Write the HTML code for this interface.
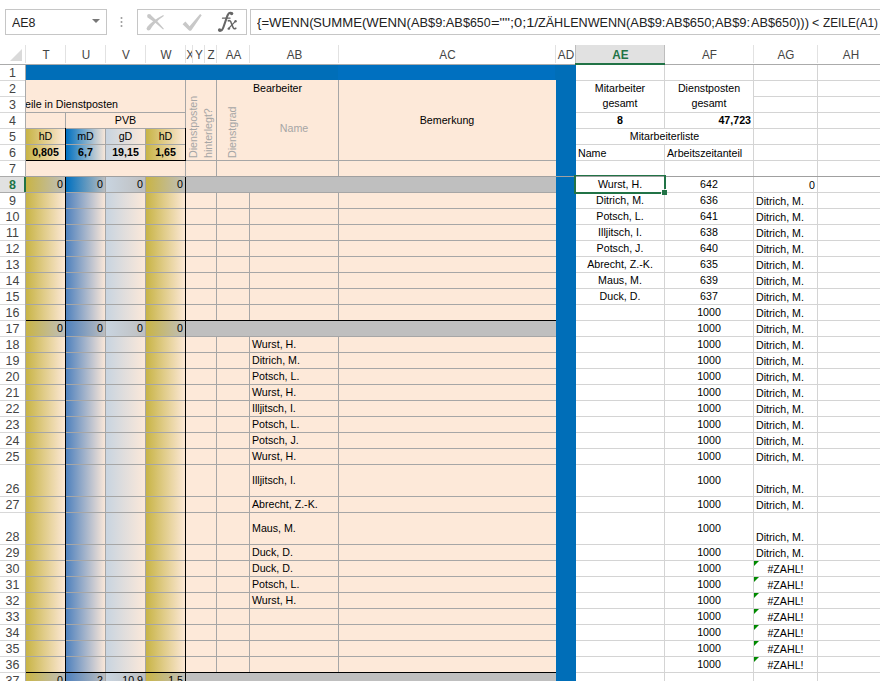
<!DOCTYPE html><html><head><meta charset="utf-8"><style>
html,body{margin:0;padding:0;}
body{width:880px;height:681px;overflow:hidden;position:relative;background:#fff;font-family:"Liberation Sans",sans-serif;}
div,p,svg{position:absolute;margin:0;}
p{white-space:nowrap;}
.c{font-size:10.67px;line-height:15px;color:#000;}
.b{font-weight:bold;}
.g{color:#a6a6a6;}
.rot{transform-origin:0 0;transform:rotate(-90deg);line-height:12px;}
.h{font-size:13px;line-height:19px;text-align:center;color:#444;transform:scaleX(0.9);}
.h.sel{color:#217346;font-weight:bold;}
.rh{font-size:12.5px;line-height:17px;text-align:center;color:#444;}
.rh.sel{color:#217346;font-weight:bold;}
.tb{font-size:13.5px;line-height:18px;color:#222;}
.fx{font-family:"Liberation Serif",serif;font-style:italic;font-size:23px;line-height:26px;color:#606060;-webkit-text-stroke:0.6px #606060;}
</style></head><body>
<div style="left:26px;top:64px;width:312px;height:16px;background:#006eb8;"></div>
<div style="left:338px;top:64px;width:217px;height:16px;background:#0070c0;"></div>
<div style="left:555px;top:64px;width:1px;height:16px;background:#006eb8;"></div>
<div style="left:556px;top:64px;width:20px;height:617px;background:#006eb8;"></div>
<div style="left:26px;top:80px;width:530px;height:96px;background:#fde9d9;"></div>
<div style="left:186px;top:176px;width:370px;height:16px;background:#bfbfbf;"></div>
<div style="left:186px;top:192px;width:370px;height:16px;background:#fde9d9;"></div>
<div style="left:186px;top:208px;width:370px;height:16px;background:#fde9d9;"></div>
<div style="left:186px;top:224px;width:370px;height:16px;background:#fde9d9;"></div>
<div style="left:186px;top:240px;width:370px;height:16px;background:#fde9d9;"></div>
<div style="left:186px;top:256px;width:370px;height:16px;background:#fde9d9;"></div>
<div style="left:186px;top:272px;width:370px;height:16px;background:#fde9d9;"></div>
<div style="left:186px;top:288px;width:370px;height:16px;background:#fde9d9;"></div>
<div style="left:186px;top:304px;width:370px;height:16px;background:#fde9d9;"></div>
<div style="left:186px;top:320px;width:370px;height:16px;background:#bfbfbf;"></div>
<div style="left:186px;top:336px;width:370px;height:16px;background:#fde9d9;"></div>
<div style="left:186px;top:352px;width:370px;height:16px;background:#fde9d9;"></div>
<div style="left:186px;top:368px;width:370px;height:16px;background:#fde9d9;"></div>
<div style="left:186px;top:384px;width:370px;height:16px;background:#fde9d9;"></div>
<div style="left:186px;top:400px;width:370px;height:16px;background:#fde9d9;"></div>
<div style="left:186px;top:416px;width:370px;height:16px;background:#fde9d9;"></div>
<div style="left:186px;top:432px;width:370px;height:16px;background:#fde9d9;"></div>
<div style="left:186px;top:448px;width:370px;height:16px;background:#fde9d9;"></div>
<div style="left:186px;top:464px;width:370px;height:32px;background:#fde9d9;"></div>
<div style="left:186px;top:496px;width:370px;height:16px;background:#fde9d9;"></div>
<div style="left:186px;top:512px;width:370px;height:32px;background:#fde9d9;"></div>
<div style="left:186px;top:544px;width:370px;height:16px;background:#fde9d9;"></div>
<div style="left:186px;top:560px;width:370px;height:16px;background:#fde9d9;"></div>
<div style="left:186px;top:576px;width:370px;height:16px;background:#fde9d9;"></div>
<div style="left:186px;top:592px;width:370px;height:16px;background:#fde9d9;"></div>
<div style="left:186px;top:608px;width:370px;height:16px;background:#fde9d9;"></div>
<div style="left:186px;top:624px;width:370px;height:16px;background:#fde9d9;"></div>
<div style="left:186px;top:640px;width:370px;height:16px;background:#fde9d9;"></div>
<div style="left:186px;top:656px;width:370px;height:16px;background:#fde9d9;"></div>
<div style="left:186px;top:672px;width:370px;height:16px;background:#bfbfbf;"></div>
<div style="left:26px;top:128px;width:40px;height:16px;background:linear-gradient(to right,#c8b446,#fde9d9);"></div>
<div style="left:66px;top:128px;width:40px;height:16px;background:linear-gradient(to right,#0070c0,#fde9d9);"></div>
<div style="left:106px;top:128px;width:40px;height:16px;background:linear-gradient(to right,#c8d4e0,#fde9d9);"></div>
<div style="left:146px;top:128px;width:40px;height:16px;background:linear-gradient(to right,#c8b446,#fde9d9);"></div>
<div style="left:26px;top:144px;width:40px;height:16px;background:linear-gradient(to right,#c8b446,#fde9d9);"></div>
<div style="left:66px;top:144px;width:40px;height:16px;background:linear-gradient(to right,#0070c0,#fde9d9);"></div>
<div style="left:106px;top:144px;width:40px;height:16px;background:linear-gradient(to right,#c8d4e0,#fde9d9);"></div>
<div style="left:146px;top:144px;width:40px;height:16px;background:linear-gradient(to right,#c8b446,#fde9d9);"></div>
<div style="left:26px;top:176px;width:40px;height:16px;background:linear-gradient(to right,#c8b446,#bfbfbf);"></div>
<div style="left:66px;top:176px;width:40px;height:16px;background:linear-gradient(to right,#0070c0,#bfbfbf);"></div>
<div style="left:106px;top:176px;width:40px;height:16px;background:linear-gradient(to right,#c8d4e0,#bfbfbf);"></div>
<div style="left:146px;top:176px;width:40px;height:16px;background:linear-gradient(to right,#c8b446,#bfbfbf);"></div>
<div style="left:26px;top:192px;width:40px;height:16px;background:linear-gradient(to right,#c8b446,#fde9d9);"></div>
<div style="left:66px;top:192px;width:40px;height:16px;background:linear-gradient(to right,#4f81bd,#fde9d9);"></div>
<div style="left:106px;top:192px;width:40px;height:16px;background:linear-gradient(to right,#c8d4e0,#fde9d9);"></div>
<div style="left:146px;top:192px;width:40px;height:16px;background:linear-gradient(to right,#c8b446,#fde9d9);"></div>
<div style="left:26px;top:208px;width:40px;height:16px;background:linear-gradient(to right,#c8b446,#fde9d9);"></div>
<div style="left:66px;top:208px;width:40px;height:16px;background:linear-gradient(to right,#4f81bd,#fde9d9);"></div>
<div style="left:106px;top:208px;width:40px;height:16px;background:linear-gradient(to right,#c8d4e0,#fde9d9);"></div>
<div style="left:146px;top:208px;width:40px;height:16px;background:linear-gradient(to right,#c8b446,#fde9d9);"></div>
<div style="left:26px;top:224px;width:40px;height:16px;background:linear-gradient(to right,#c8b446,#fde9d9);"></div>
<div style="left:66px;top:224px;width:40px;height:16px;background:linear-gradient(to right,#4f81bd,#fde9d9);"></div>
<div style="left:106px;top:224px;width:40px;height:16px;background:linear-gradient(to right,#c8d4e0,#fde9d9);"></div>
<div style="left:146px;top:224px;width:40px;height:16px;background:linear-gradient(to right,#c8b446,#fde9d9);"></div>
<div style="left:26px;top:240px;width:40px;height:16px;background:linear-gradient(to right,#c8b446,#fde9d9);"></div>
<div style="left:66px;top:240px;width:40px;height:16px;background:linear-gradient(to right,#4f81bd,#fde9d9);"></div>
<div style="left:106px;top:240px;width:40px;height:16px;background:linear-gradient(to right,#c8d4e0,#fde9d9);"></div>
<div style="left:146px;top:240px;width:40px;height:16px;background:linear-gradient(to right,#c8b446,#fde9d9);"></div>
<div style="left:26px;top:256px;width:40px;height:16px;background:linear-gradient(to right,#c8b446,#fde9d9);"></div>
<div style="left:66px;top:256px;width:40px;height:16px;background:linear-gradient(to right,#4f81bd,#fde9d9);"></div>
<div style="left:106px;top:256px;width:40px;height:16px;background:linear-gradient(to right,#c8d4e0,#fde9d9);"></div>
<div style="left:146px;top:256px;width:40px;height:16px;background:linear-gradient(to right,#c8b446,#fde9d9);"></div>
<div style="left:26px;top:272px;width:40px;height:16px;background:linear-gradient(to right,#c8b446,#fde9d9);"></div>
<div style="left:66px;top:272px;width:40px;height:16px;background:linear-gradient(to right,#4f81bd,#fde9d9);"></div>
<div style="left:106px;top:272px;width:40px;height:16px;background:linear-gradient(to right,#c8d4e0,#fde9d9);"></div>
<div style="left:146px;top:272px;width:40px;height:16px;background:linear-gradient(to right,#c8b446,#fde9d9);"></div>
<div style="left:26px;top:288px;width:40px;height:16px;background:linear-gradient(to right,#c8b446,#fde9d9);"></div>
<div style="left:66px;top:288px;width:40px;height:16px;background:linear-gradient(to right,#4f81bd,#fde9d9);"></div>
<div style="left:106px;top:288px;width:40px;height:16px;background:linear-gradient(to right,#c8d4e0,#fde9d9);"></div>
<div style="left:146px;top:288px;width:40px;height:16px;background:linear-gradient(to right,#c8b446,#fde9d9);"></div>
<div style="left:26px;top:304px;width:40px;height:16px;background:linear-gradient(to right,#c8b446,#fde9d9);"></div>
<div style="left:66px;top:304px;width:40px;height:16px;background:linear-gradient(to right,#4f81bd,#fde9d9);"></div>
<div style="left:106px;top:304px;width:40px;height:16px;background:linear-gradient(to right,#c8d4e0,#fde9d9);"></div>
<div style="left:146px;top:304px;width:40px;height:16px;background:linear-gradient(to right,#c8b446,#fde9d9);"></div>
<div style="left:26px;top:320px;width:40px;height:16px;background:linear-gradient(to right,#c8b446,#bfbfbf);"></div>
<div style="left:66px;top:320px;width:40px;height:16px;background:linear-gradient(to right,#4f81bd,#bfbfbf);"></div>
<div style="left:106px;top:320px;width:40px;height:16px;background:linear-gradient(to right,#c8d4e0,#bfbfbf);"></div>
<div style="left:146px;top:320px;width:40px;height:16px;background:linear-gradient(to right,#c8b446,#bfbfbf);"></div>
<div style="left:26px;top:336px;width:40px;height:16px;background:linear-gradient(to right,#c8b446,#fde9d9);"></div>
<div style="left:66px;top:336px;width:40px;height:16px;background:linear-gradient(to right,#4f81bd,#fde9d9);"></div>
<div style="left:106px;top:336px;width:40px;height:16px;background:linear-gradient(to right,#c8d4e0,#fde9d9);"></div>
<div style="left:146px;top:336px;width:40px;height:16px;background:linear-gradient(to right,#c8b446,#fde9d9);"></div>
<div style="left:26px;top:352px;width:40px;height:16px;background:linear-gradient(to right,#c8b446,#fde9d9);"></div>
<div style="left:66px;top:352px;width:40px;height:16px;background:linear-gradient(to right,#4f81bd,#fde9d9);"></div>
<div style="left:106px;top:352px;width:40px;height:16px;background:linear-gradient(to right,#c8d4e0,#fde9d9);"></div>
<div style="left:146px;top:352px;width:40px;height:16px;background:linear-gradient(to right,#c8b446,#fde9d9);"></div>
<div style="left:26px;top:368px;width:40px;height:16px;background:linear-gradient(to right,#c8b446,#fde9d9);"></div>
<div style="left:66px;top:368px;width:40px;height:16px;background:linear-gradient(to right,#4f81bd,#fde9d9);"></div>
<div style="left:106px;top:368px;width:40px;height:16px;background:linear-gradient(to right,#c8d4e0,#fde9d9);"></div>
<div style="left:146px;top:368px;width:40px;height:16px;background:linear-gradient(to right,#c8b446,#fde9d9);"></div>
<div style="left:26px;top:384px;width:40px;height:16px;background:linear-gradient(to right,#c8b446,#fde9d9);"></div>
<div style="left:66px;top:384px;width:40px;height:16px;background:linear-gradient(to right,#4f81bd,#fde9d9);"></div>
<div style="left:106px;top:384px;width:40px;height:16px;background:linear-gradient(to right,#c8d4e0,#fde9d9);"></div>
<div style="left:146px;top:384px;width:40px;height:16px;background:linear-gradient(to right,#c8b446,#fde9d9);"></div>
<div style="left:26px;top:400px;width:40px;height:16px;background:linear-gradient(to right,#c8b446,#fde9d9);"></div>
<div style="left:66px;top:400px;width:40px;height:16px;background:linear-gradient(to right,#4f81bd,#fde9d9);"></div>
<div style="left:106px;top:400px;width:40px;height:16px;background:linear-gradient(to right,#c8d4e0,#fde9d9);"></div>
<div style="left:146px;top:400px;width:40px;height:16px;background:linear-gradient(to right,#c8b446,#fde9d9);"></div>
<div style="left:26px;top:416px;width:40px;height:16px;background:linear-gradient(to right,#c8b446,#fde9d9);"></div>
<div style="left:66px;top:416px;width:40px;height:16px;background:linear-gradient(to right,#4f81bd,#fde9d9);"></div>
<div style="left:106px;top:416px;width:40px;height:16px;background:linear-gradient(to right,#c8d4e0,#fde9d9);"></div>
<div style="left:146px;top:416px;width:40px;height:16px;background:linear-gradient(to right,#c8b446,#fde9d9);"></div>
<div style="left:26px;top:432px;width:40px;height:16px;background:linear-gradient(to right,#c8b446,#fde9d9);"></div>
<div style="left:66px;top:432px;width:40px;height:16px;background:linear-gradient(to right,#4f81bd,#fde9d9);"></div>
<div style="left:106px;top:432px;width:40px;height:16px;background:linear-gradient(to right,#c8d4e0,#fde9d9);"></div>
<div style="left:146px;top:432px;width:40px;height:16px;background:linear-gradient(to right,#c8b446,#fde9d9);"></div>
<div style="left:26px;top:448px;width:40px;height:16px;background:linear-gradient(to right,#c8b446,#fde9d9);"></div>
<div style="left:66px;top:448px;width:40px;height:16px;background:linear-gradient(to right,#4f81bd,#fde9d9);"></div>
<div style="left:106px;top:448px;width:40px;height:16px;background:linear-gradient(to right,#c8d4e0,#fde9d9);"></div>
<div style="left:146px;top:448px;width:40px;height:16px;background:linear-gradient(to right,#c8b446,#fde9d9);"></div>
<div style="left:26px;top:464px;width:40px;height:32px;background:linear-gradient(to right,#c8b446,#fde9d9);"></div>
<div style="left:66px;top:464px;width:40px;height:32px;background:linear-gradient(to right,#4f81bd,#fde9d9);"></div>
<div style="left:106px;top:464px;width:40px;height:32px;background:linear-gradient(to right,#c8d4e0,#fde9d9);"></div>
<div style="left:146px;top:464px;width:40px;height:32px;background:linear-gradient(to right,#c8b446,#fde9d9);"></div>
<div style="left:26px;top:496px;width:40px;height:16px;background:linear-gradient(to right,#c8b446,#fde9d9);"></div>
<div style="left:66px;top:496px;width:40px;height:16px;background:linear-gradient(to right,#4f81bd,#fde9d9);"></div>
<div style="left:106px;top:496px;width:40px;height:16px;background:linear-gradient(to right,#c8d4e0,#fde9d9);"></div>
<div style="left:146px;top:496px;width:40px;height:16px;background:linear-gradient(to right,#c8b446,#fde9d9);"></div>
<div style="left:26px;top:512px;width:40px;height:32px;background:linear-gradient(to right,#c8b446,#fde9d9);"></div>
<div style="left:66px;top:512px;width:40px;height:32px;background:linear-gradient(to right,#4f81bd,#fde9d9);"></div>
<div style="left:106px;top:512px;width:40px;height:32px;background:linear-gradient(to right,#c8d4e0,#fde9d9);"></div>
<div style="left:146px;top:512px;width:40px;height:32px;background:linear-gradient(to right,#c8b446,#fde9d9);"></div>
<div style="left:26px;top:544px;width:40px;height:16px;background:linear-gradient(to right,#c8b446,#fde9d9);"></div>
<div style="left:66px;top:544px;width:40px;height:16px;background:linear-gradient(to right,#4f81bd,#fde9d9);"></div>
<div style="left:106px;top:544px;width:40px;height:16px;background:linear-gradient(to right,#c8d4e0,#fde9d9);"></div>
<div style="left:146px;top:544px;width:40px;height:16px;background:linear-gradient(to right,#c8b446,#fde9d9);"></div>
<div style="left:26px;top:560px;width:40px;height:16px;background:linear-gradient(to right,#c8b446,#fde9d9);"></div>
<div style="left:66px;top:560px;width:40px;height:16px;background:linear-gradient(to right,#4f81bd,#fde9d9);"></div>
<div style="left:106px;top:560px;width:40px;height:16px;background:linear-gradient(to right,#c8d4e0,#fde9d9);"></div>
<div style="left:146px;top:560px;width:40px;height:16px;background:linear-gradient(to right,#c8b446,#fde9d9);"></div>
<div style="left:26px;top:576px;width:40px;height:16px;background:linear-gradient(to right,#c8b446,#fde9d9);"></div>
<div style="left:66px;top:576px;width:40px;height:16px;background:linear-gradient(to right,#4f81bd,#fde9d9);"></div>
<div style="left:106px;top:576px;width:40px;height:16px;background:linear-gradient(to right,#c8d4e0,#fde9d9);"></div>
<div style="left:146px;top:576px;width:40px;height:16px;background:linear-gradient(to right,#c8b446,#fde9d9);"></div>
<div style="left:26px;top:592px;width:40px;height:16px;background:linear-gradient(to right,#c8b446,#fde9d9);"></div>
<div style="left:66px;top:592px;width:40px;height:16px;background:linear-gradient(to right,#4f81bd,#fde9d9);"></div>
<div style="left:106px;top:592px;width:40px;height:16px;background:linear-gradient(to right,#c8d4e0,#fde9d9);"></div>
<div style="left:146px;top:592px;width:40px;height:16px;background:linear-gradient(to right,#c8b446,#fde9d9);"></div>
<div style="left:26px;top:608px;width:40px;height:16px;background:linear-gradient(to right,#c8b446,#fde9d9);"></div>
<div style="left:66px;top:608px;width:40px;height:16px;background:linear-gradient(to right,#4f81bd,#fde9d9);"></div>
<div style="left:106px;top:608px;width:40px;height:16px;background:linear-gradient(to right,#c8d4e0,#fde9d9);"></div>
<div style="left:146px;top:608px;width:40px;height:16px;background:linear-gradient(to right,#c8b446,#fde9d9);"></div>
<div style="left:26px;top:624px;width:40px;height:16px;background:linear-gradient(to right,#c8b446,#fde9d9);"></div>
<div style="left:66px;top:624px;width:40px;height:16px;background:linear-gradient(to right,#4f81bd,#fde9d9);"></div>
<div style="left:106px;top:624px;width:40px;height:16px;background:linear-gradient(to right,#c8d4e0,#fde9d9);"></div>
<div style="left:146px;top:624px;width:40px;height:16px;background:linear-gradient(to right,#c8b446,#fde9d9);"></div>
<div style="left:26px;top:640px;width:40px;height:16px;background:linear-gradient(to right,#c8b446,#fde9d9);"></div>
<div style="left:66px;top:640px;width:40px;height:16px;background:linear-gradient(to right,#4f81bd,#fde9d9);"></div>
<div style="left:106px;top:640px;width:40px;height:16px;background:linear-gradient(to right,#c8d4e0,#fde9d9);"></div>
<div style="left:146px;top:640px;width:40px;height:16px;background:linear-gradient(to right,#c8b446,#fde9d9);"></div>
<div style="left:26px;top:656px;width:40px;height:16px;background:linear-gradient(to right,#c8b446,#fde9d9);"></div>
<div style="left:66px;top:656px;width:40px;height:16px;background:linear-gradient(to right,#4f81bd,#fde9d9);"></div>
<div style="left:106px;top:656px;width:40px;height:16px;background:linear-gradient(to right,#c8d4e0,#fde9d9);"></div>
<div style="left:146px;top:656px;width:40px;height:16px;background:linear-gradient(to right,#c8b446,#fde9d9);"></div>
<div style="left:26px;top:672px;width:40px;height:16px;background:linear-gradient(to right,#c8b446,#bfbfbf);"></div>
<div style="left:66px;top:672px;width:40px;height:16px;background:linear-gradient(to right,#4f81bd,#bfbfbf);"></div>
<div style="left:106px;top:672px;width:40px;height:16px;background:linear-gradient(to right,#c8d4e0,#bfbfbf);"></div>
<div style="left:146px;top:672px;width:40px;height:16px;background:linear-gradient(to right,#c8b446,#bfbfbf);"></div>
<div style="left:26px;top:112px;width:160px;height:1px;background:#a6a6a6;"></div>
<div style="left:65px;top:112px;width:1px;height:16px;background:#a6a6a6;"></div>
<div style="left:26px;top:128px;width:160px;height:1px;background:#a6a6a6;"></div>
<div style="left:26px;top:144px;width:160px;height:1px;background:#a6a6a6;"></div>
<div style="left:105px;top:128px;width:1px;height:32px;background:#a6a6a6;"></div>
<div style="left:145px;top:128px;width:1px;height:32px;background:#a6a6a6;"></div>
<div style="left:185px;top:80px;width:1px;height:48px;background:#a6a6a6;"></div>
<div style="left:185px;top:160px;width:1px;height:16px;background:#a6a6a6;"></div>
<div style="left:216px;top:80px;width:1px;height:96px;background:#a6a6a6;"></div>
<div style="left:338px;top:80px;width:1px;height:96px;background:#a6a6a6;"></div>
<div style="left:186px;top:160px;width:370px;height:1px;background:#a6a6a6;"></div>
<div style="left:26px;top:192px;width:530px;height:1px;background:#a6a6a6;"></div>
<div style="left:26px;top:208px;width:530px;height:1px;background:#a6a6a6;"></div>
<div style="left:26px;top:224px;width:530px;height:1px;background:#a6a6a6;"></div>
<div style="left:26px;top:240px;width:530px;height:1px;background:#a6a6a6;"></div>
<div style="left:26px;top:256px;width:530px;height:1px;background:#a6a6a6;"></div>
<div style="left:26px;top:272px;width:530px;height:1px;background:#a6a6a6;"></div>
<div style="left:26px;top:288px;width:530px;height:1px;background:#a6a6a6;"></div>
<div style="left:26px;top:304px;width:530px;height:1px;background:#a6a6a6;"></div>
<div style="left:26px;top:336px;width:530px;height:1px;background:#a6a6a6;"></div>
<div style="left:26px;top:352px;width:530px;height:1px;background:#a6a6a6;"></div>
<div style="left:26px;top:368px;width:530px;height:1px;background:#a6a6a6;"></div>
<div style="left:26px;top:384px;width:530px;height:1px;background:#a6a6a6;"></div>
<div style="left:26px;top:400px;width:530px;height:1px;background:#a6a6a6;"></div>
<div style="left:26px;top:416px;width:530px;height:1px;background:#a6a6a6;"></div>
<div style="left:26px;top:432px;width:530px;height:1px;background:#a6a6a6;"></div>
<div style="left:26px;top:448px;width:530px;height:1px;background:#a6a6a6;"></div>
<div style="left:26px;top:464px;width:530px;height:1px;background:#a6a6a6;"></div>
<div style="left:26px;top:496px;width:530px;height:1px;background:#a6a6a6;"></div>
<div style="left:26px;top:512px;width:530px;height:1px;background:#a6a6a6;"></div>
<div style="left:26px;top:544px;width:530px;height:1px;background:#a6a6a6;"></div>
<div style="left:26px;top:560px;width:530px;height:1px;background:#a6a6a6;"></div>
<div style="left:26px;top:576px;width:530px;height:1px;background:#a6a6a6;"></div>
<div style="left:26px;top:592px;width:530px;height:1px;background:#a6a6a6;"></div>
<div style="left:26px;top:608px;width:530px;height:1px;background:#a6a6a6;"></div>
<div style="left:26px;top:624px;width:530px;height:1px;background:#a6a6a6;"></div>
<div style="left:26px;top:640px;width:530px;height:1px;background:#a6a6a6;"></div>
<div style="left:26px;top:656px;width:530px;height:1px;background:#a6a6a6;"></div>
<div style="left:105px;top:176px;width:1px;height:16px;background:#a6a6a6;"></div>
<div style="left:145px;top:176px;width:1px;height:16px;background:#a6a6a6;"></div>
<div style="left:105px;top:192px;width:1px;height:16px;background:#a6a6a6;"></div>
<div style="left:145px;top:192px;width:1px;height:16px;background:#a6a6a6;"></div>
<div style="left:216px;top:192px;width:1px;height:16px;background:#a6a6a6;"></div>
<div style="left:249px;top:192px;width:1px;height:16px;background:#a6a6a6;"></div>
<div style="left:338px;top:192px;width:1px;height:16px;background:#a6a6a6;"></div>
<div style="left:105px;top:208px;width:1px;height:16px;background:#a6a6a6;"></div>
<div style="left:145px;top:208px;width:1px;height:16px;background:#a6a6a6;"></div>
<div style="left:216px;top:208px;width:1px;height:16px;background:#a6a6a6;"></div>
<div style="left:249px;top:208px;width:1px;height:16px;background:#a6a6a6;"></div>
<div style="left:338px;top:208px;width:1px;height:16px;background:#a6a6a6;"></div>
<div style="left:105px;top:224px;width:1px;height:16px;background:#a6a6a6;"></div>
<div style="left:145px;top:224px;width:1px;height:16px;background:#a6a6a6;"></div>
<div style="left:216px;top:224px;width:1px;height:16px;background:#a6a6a6;"></div>
<div style="left:249px;top:224px;width:1px;height:16px;background:#a6a6a6;"></div>
<div style="left:338px;top:224px;width:1px;height:16px;background:#a6a6a6;"></div>
<div style="left:105px;top:240px;width:1px;height:16px;background:#a6a6a6;"></div>
<div style="left:145px;top:240px;width:1px;height:16px;background:#a6a6a6;"></div>
<div style="left:216px;top:240px;width:1px;height:16px;background:#a6a6a6;"></div>
<div style="left:249px;top:240px;width:1px;height:16px;background:#a6a6a6;"></div>
<div style="left:338px;top:240px;width:1px;height:16px;background:#a6a6a6;"></div>
<div style="left:105px;top:256px;width:1px;height:16px;background:#a6a6a6;"></div>
<div style="left:145px;top:256px;width:1px;height:16px;background:#a6a6a6;"></div>
<div style="left:216px;top:256px;width:1px;height:16px;background:#a6a6a6;"></div>
<div style="left:249px;top:256px;width:1px;height:16px;background:#a6a6a6;"></div>
<div style="left:338px;top:256px;width:1px;height:16px;background:#a6a6a6;"></div>
<div style="left:105px;top:272px;width:1px;height:16px;background:#a6a6a6;"></div>
<div style="left:145px;top:272px;width:1px;height:16px;background:#a6a6a6;"></div>
<div style="left:216px;top:272px;width:1px;height:16px;background:#a6a6a6;"></div>
<div style="left:249px;top:272px;width:1px;height:16px;background:#a6a6a6;"></div>
<div style="left:338px;top:272px;width:1px;height:16px;background:#a6a6a6;"></div>
<div style="left:105px;top:288px;width:1px;height:16px;background:#a6a6a6;"></div>
<div style="left:145px;top:288px;width:1px;height:16px;background:#a6a6a6;"></div>
<div style="left:216px;top:288px;width:1px;height:16px;background:#a6a6a6;"></div>
<div style="left:249px;top:288px;width:1px;height:16px;background:#a6a6a6;"></div>
<div style="left:338px;top:288px;width:1px;height:16px;background:#a6a6a6;"></div>
<div style="left:105px;top:304px;width:1px;height:16px;background:#a6a6a6;"></div>
<div style="left:145px;top:304px;width:1px;height:16px;background:#a6a6a6;"></div>
<div style="left:216px;top:304px;width:1px;height:16px;background:#a6a6a6;"></div>
<div style="left:249px;top:304px;width:1px;height:16px;background:#a6a6a6;"></div>
<div style="left:338px;top:304px;width:1px;height:16px;background:#a6a6a6;"></div>
<div style="left:105px;top:320px;width:1px;height:16px;background:#a6a6a6;"></div>
<div style="left:145px;top:320px;width:1px;height:16px;background:#a6a6a6;"></div>
<div style="left:105px;top:336px;width:1px;height:16px;background:#a6a6a6;"></div>
<div style="left:145px;top:336px;width:1px;height:16px;background:#a6a6a6;"></div>
<div style="left:216px;top:336px;width:1px;height:16px;background:#a6a6a6;"></div>
<div style="left:249px;top:336px;width:1px;height:16px;background:#a6a6a6;"></div>
<div style="left:338px;top:336px;width:1px;height:16px;background:#a6a6a6;"></div>
<div style="left:105px;top:352px;width:1px;height:16px;background:#a6a6a6;"></div>
<div style="left:145px;top:352px;width:1px;height:16px;background:#a6a6a6;"></div>
<div style="left:216px;top:352px;width:1px;height:16px;background:#a6a6a6;"></div>
<div style="left:249px;top:352px;width:1px;height:16px;background:#a6a6a6;"></div>
<div style="left:338px;top:352px;width:1px;height:16px;background:#a6a6a6;"></div>
<div style="left:105px;top:368px;width:1px;height:16px;background:#a6a6a6;"></div>
<div style="left:145px;top:368px;width:1px;height:16px;background:#a6a6a6;"></div>
<div style="left:216px;top:368px;width:1px;height:16px;background:#a6a6a6;"></div>
<div style="left:249px;top:368px;width:1px;height:16px;background:#a6a6a6;"></div>
<div style="left:338px;top:368px;width:1px;height:16px;background:#a6a6a6;"></div>
<div style="left:105px;top:384px;width:1px;height:16px;background:#a6a6a6;"></div>
<div style="left:145px;top:384px;width:1px;height:16px;background:#a6a6a6;"></div>
<div style="left:216px;top:384px;width:1px;height:16px;background:#a6a6a6;"></div>
<div style="left:249px;top:384px;width:1px;height:16px;background:#a6a6a6;"></div>
<div style="left:338px;top:384px;width:1px;height:16px;background:#a6a6a6;"></div>
<div style="left:105px;top:400px;width:1px;height:16px;background:#a6a6a6;"></div>
<div style="left:145px;top:400px;width:1px;height:16px;background:#a6a6a6;"></div>
<div style="left:216px;top:400px;width:1px;height:16px;background:#a6a6a6;"></div>
<div style="left:249px;top:400px;width:1px;height:16px;background:#a6a6a6;"></div>
<div style="left:338px;top:400px;width:1px;height:16px;background:#a6a6a6;"></div>
<div style="left:105px;top:416px;width:1px;height:16px;background:#a6a6a6;"></div>
<div style="left:145px;top:416px;width:1px;height:16px;background:#a6a6a6;"></div>
<div style="left:216px;top:416px;width:1px;height:16px;background:#a6a6a6;"></div>
<div style="left:249px;top:416px;width:1px;height:16px;background:#a6a6a6;"></div>
<div style="left:338px;top:416px;width:1px;height:16px;background:#a6a6a6;"></div>
<div style="left:105px;top:432px;width:1px;height:16px;background:#a6a6a6;"></div>
<div style="left:145px;top:432px;width:1px;height:16px;background:#a6a6a6;"></div>
<div style="left:216px;top:432px;width:1px;height:16px;background:#a6a6a6;"></div>
<div style="left:249px;top:432px;width:1px;height:16px;background:#a6a6a6;"></div>
<div style="left:338px;top:432px;width:1px;height:16px;background:#a6a6a6;"></div>
<div style="left:105px;top:448px;width:1px;height:16px;background:#a6a6a6;"></div>
<div style="left:145px;top:448px;width:1px;height:16px;background:#a6a6a6;"></div>
<div style="left:216px;top:448px;width:1px;height:16px;background:#a6a6a6;"></div>
<div style="left:249px;top:448px;width:1px;height:16px;background:#a6a6a6;"></div>
<div style="left:338px;top:448px;width:1px;height:16px;background:#a6a6a6;"></div>
<div style="left:105px;top:464px;width:1px;height:32px;background:#a6a6a6;"></div>
<div style="left:145px;top:464px;width:1px;height:32px;background:#a6a6a6;"></div>
<div style="left:216px;top:464px;width:1px;height:32px;background:#a6a6a6;"></div>
<div style="left:249px;top:464px;width:1px;height:32px;background:#a6a6a6;"></div>
<div style="left:338px;top:464px;width:1px;height:32px;background:#a6a6a6;"></div>
<div style="left:105px;top:496px;width:1px;height:16px;background:#a6a6a6;"></div>
<div style="left:145px;top:496px;width:1px;height:16px;background:#a6a6a6;"></div>
<div style="left:216px;top:496px;width:1px;height:16px;background:#a6a6a6;"></div>
<div style="left:249px;top:496px;width:1px;height:16px;background:#a6a6a6;"></div>
<div style="left:338px;top:496px;width:1px;height:16px;background:#a6a6a6;"></div>
<div style="left:105px;top:512px;width:1px;height:32px;background:#a6a6a6;"></div>
<div style="left:145px;top:512px;width:1px;height:32px;background:#a6a6a6;"></div>
<div style="left:216px;top:512px;width:1px;height:32px;background:#a6a6a6;"></div>
<div style="left:249px;top:512px;width:1px;height:32px;background:#a6a6a6;"></div>
<div style="left:338px;top:512px;width:1px;height:32px;background:#a6a6a6;"></div>
<div style="left:105px;top:544px;width:1px;height:16px;background:#a6a6a6;"></div>
<div style="left:145px;top:544px;width:1px;height:16px;background:#a6a6a6;"></div>
<div style="left:216px;top:544px;width:1px;height:16px;background:#a6a6a6;"></div>
<div style="left:249px;top:544px;width:1px;height:16px;background:#a6a6a6;"></div>
<div style="left:338px;top:544px;width:1px;height:16px;background:#a6a6a6;"></div>
<div style="left:105px;top:560px;width:1px;height:16px;background:#a6a6a6;"></div>
<div style="left:145px;top:560px;width:1px;height:16px;background:#a6a6a6;"></div>
<div style="left:216px;top:560px;width:1px;height:16px;background:#a6a6a6;"></div>
<div style="left:249px;top:560px;width:1px;height:16px;background:#a6a6a6;"></div>
<div style="left:338px;top:560px;width:1px;height:16px;background:#a6a6a6;"></div>
<div style="left:105px;top:576px;width:1px;height:16px;background:#a6a6a6;"></div>
<div style="left:145px;top:576px;width:1px;height:16px;background:#a6a6a6;"></div>
<div style="left:216px;top:576px;width:1px;height:16px;background:#a6a6a6;"></div>
<div style="left:249px;top:576px;width:1px;height:16px;background:#a6a6a6;"></div>
<div style="left:338px;top:576px;width:1px;height:16px;background:#a6a6a6;"></div>
<div style="left:105px;top:592px;width:1px;height:16px;background:#a6a6a6;"></div>
<div style="left:145px;top:592px;width:1px;height:16px;background:#a6a6a6;"></div>
<div style="left:216px;top:592px;width:1px;height:16px;background:#a6a6a6;"></div>
<div style="left:249px;top:592px;width:1px;height:16px;background:#a6a6a6;"></div>
<div style="left:338px;top:592px;width:1px;height:16px;background:#a6a6a6;"></div>
<div style="left:105px;top:608px;width:1px;height:16px;background:#a6a6a6;"></div>
<div style="left:145px;top:608px;width:1px;height:16px;background:#a6a6a6;"></div>
<div style="left:216px;top:608px;width:1px;height:16px;background:#a6a6a6;"></div>
<div style="left:249px;top:608px;width:1px;height:16px;background:#a6a6a6;"></div>
<div style="left:338px;top:608px;width:1px;height:16px;background:#a6a6a6;"></div>
<div style="left:105px;top:624px;width:1px;height:16px;background:#a6a6a6;"></div>
<div style="left:145px;top:624px;width:1px;height:16px;background:#a6a6a6;"></div>
<div style="left:216px;top:624px;width:1px;height:16px;background:#a6a6a6;"></div>
<div style="left:249px;top:624px;width:1px;height:16px;background:#a6a6a6;"></div>
<div style="left:338px;top:624px;width:1px;height:16px;background:#a6a6a6;"></div>
<div style="left:105px;top:640px;width:1px;height:16px;background:#a6a6a6;"></div>
<div style="left:145px;top:640px;width:1px;height:16px;background:#a6a6a6;"></div>
<div style="left:216px;top:640px;width:1px;height:16px;background:#a6a6a6;"></div>
<div style="left:249px;top:640px;width:1px;height:16px;background:#a6a6a6;"></div>
<div style="left:338px;top:640px;width:1px;height:16px;background:#a6a6a6;"></div>
<div style="left:105px;top:656px;width:1px;height:16px;background:#a6a6a6;"></div>
<div style="left:145px;top:656px;width:1px;height:16px;background:#a6a6a6;"></div>
<div style="left:216px;top:656px;width:1px;height:16px;background:#a6a6a6;"></div>
<div style="left:249px;top:656px;width:1px;height:16px;background:#a6a6a6;"></div>
<div style="left:338px;top:656px;width:1px;height:16px;background:#a6a6a6;"></div>
<div style="left:105px;top:672px;width:1px;height:16px;background:#a6a6a6;"></div>
<div style="left:145px;top:672px;width:1px;height:16px;background:#a6a6a6;"></div>
<div style="left:65px;top:128px;width:1px;height:32px;background:#000;"></div>
<div style="left:185px;top:128px;width:1px;height:32px;background:#000;"></div>
<div style="left:26px;top:160px;width:160px;height:1px;background:#000;"></div>
<div style="left:65px;top:176px;width:1px;height:505px;background:#000;"></div>
<div style="left:185px;top:176px;width:1px;height:505px;background:#000;"></div>
<div style="left:26px;top:320px;width:530px;height:1px;background:#000;"></div>
<div style="left:26px;top:672px;width:530px;height:1px;background:#000;"></div>
<div style="left:576px;top:64px;width:305px;height:1px;background:#d4d4d4;"></div>
<div style="left:576px;top:80px;width:305px;height:1px;background:#d4d4d4;"></div>
<div style="left:754px;top:96px;width:127px;height:1px;background:#d4d4d4;"></div>
<div style="left:576px;top:112px;width:305px;height:1px;background:#d4d4d4;"></div>
<div style="left:576px;top:128px;width:305px;height:1px;background:#d4d4d4;"></div>
<div style="left:576px;top:144px;width:305px;height:1px;background:#d4d4d4;"></div>
<div style="left:576px;top:160px;width:305px;height:1px;background:#d4d4d4;"></div>
<div style="left:576px;top:192px;width:305px;height:1px;background:#d4d4d4;"></div>
<div style="left:576px;top:208px;width:305px;height:1px;background:#d4d4d4;"></div>
<div style="left:576px;top:224px;width:305px;height:1px;background:#d4d4d4;"></div>
<div style="left:576px;top:240px;width:305px;height:1px;background:#d4d4d4;"></div>
<div style="left:576px;top:256px;width:305px;height:1px;background:#d4d4d4;"></div>
<div style="left:576px;top:272px;width:305px;height:1px;background:#d4d4d4;"></div>
<div style="left:576px;top:288px;width:305px;height:1px;background:#d4d4d4;"></div>
<div style="left:576px;top:304px;width:305px;height:1px;background:#d4d4d4;"></div>
<div style="left:576px;top:320px;width:305px;height:1px;background:#d4d4d4;"></div>
<div style="left:576px;top:336px;width:305px;height:1px;background:#d4d4d4;"></div>
<div style="left:576px;top:352px;width:305px;height:1px;background:#d4d4d4;"></div>
<div style="left:576px;top:368px;width:305px;height:1px;background:#d4d4d4;"></div>
<div style="left:576px;top:384px;width:305px;height:1px;background:#d4d4d4;"></div>
<div style="left:576px;top:400px;width:305px;height:1px;background:#d4d4d4;"></div>
<div style="left:576px;top:416px;width:305px;height:1px;background:#d4d4d4;"></div>
<div style="left:576px;top:432px;width:305px;height:1px;background:#d4d4d4;"></div>
<div style="left:576px;top:448px;width:305px;height:1px;background:#d4d4d4;"></div>
<div style="left:576px;top:464px;width:305px;height:1px;background:#d4d4d4;"></div>
<div style="left:576px;top:496px;width:305px;height:1px;background:#d4d4d4;"></div>
<div style="left:576px;top:512px;width:305px;height:1px;background:#d4d4d4;"></div>
<div style="left:576px;top:544px;width:305px;height:1px;background:#d4d4d4;"></div>
<div style="left:576px;top:560px;width:305px;height:1px;background:#d4d4d4;"></div>
<div style="left:576px;top:576px;width:305px;height:1px;background:#d4d4d4;"></div>
<div style="left:576px;top:592px;width:305px;height:1px;background:#d4d4d4;"></div>
<div style="left:576px;top:608px;width:305px;height:1px;background:#d4d4d4;"></div>
<div style="left:576px;top:624px;width:305px;height:1px;background:#d4d4d4;"></div>
<div style="left:576px;top:640px;width:305px;height:1px;background:#d4d4d4;"></div>
<div style="left:576px;top:656px;width:305px;height:1px;background:#d4d4d4;"></div>
<div style="left:576px;top:672px;width:305px;height:1px;background:#d4d4d4;"></div>
<div style="left:664px;top:64px;width:1px;height:16px;background:#d4d4d4;"></div>
<div style="left:753px;top:64px;width:1px;height:16px;background:#d4d4d4;"></div>
<div style="left:817px;top:64px;width:1px;height:16px;background:#d4d4d4;"></div>
<div style="left:664px;top:80px;width:1px;height:16px;background:#d4d4d4;"></div>
<div style="left:753px;top:80px;width:1px;height:16px;background:#d4d4d4;"></div>
<div style="left:817px;top:80px;width:1px;height:16px;background:#d4d4d4;"></div>
<div style="left:664px;top:96px;width:1px;height:16px;background:#d4d4d4;"></div>
<div style="left:753px;top:96px;width:1px;height:16px;background:#d4d4d4;"></div>
<div style="left:817px;top:96px;width:1px;height:16px;background:#d4d4d4;"></div>
<div style="left:664px;top:112px;width:1px;height:16px;background:#d4d4d4;"></div>
<div style="left:753px;top:112px;width:1px;height:16px;background:#d4d4d4;"></div>
<div style="left:817px;top:112px;width:1px;height:16px;background:#d4d4d4;"></div>
<div style="left:753px;top:128px;width:1px;height:16px;background:#d4d4d4;"></div>
<div style="left:817px;top:128px;width:1px;height:16px;background:#d4d4d4;"></div>
<div style="left:664px;top:144px;width:1px;height:16px;background:#d4d4d4;"></div>
<div style="left:753px;top:144px;width:1px;height:16px;background:#d4d4d4;"></div>
<div style="left:817px;top:144px;width:1px;height:16px;background:#d4d4d4;"></div>
<div style="left:664px;top:160px;width:1px;height:16px;background:#d4d4d4;"></div>
<div style="left:753px;top:160px;width:1px;height:16px;background:#d4d4d4;"></div>
<div style="left:817px;top:160px;width:1px;height:16px;background:#d4d4d4;"></div>
<div style="left:664px;top:176px;width:1px;height:16px;background:#d4d4d4;"></div>
<div style="left:753px;top:176px;width:1px;height:16px;background:#d4d4d4;"></div>
<div style="left:817px;top:176px;width:1px;height:16px;background:#d4d4d4;"></div>
<div style="left:664px;top:192px;width:1px;height:16px;background:#d4d4d4;"></div>
<div style="left:753px;top:192px;width:1px;height:16px;background:#d4d4d4;"></div>
<div style="left:817px;top:192px;width:1px;height:16px;background:#d4d4d4;"></div>
<div style="left:664px;top:208px;width:1px;height:16px;background:#d4d4d4;"></div>
<div style="left:753px;top:208px;width:1px;height:16px;background:#d4d4d4;"></div>
<div style="left:817px;top:208px;width:1px;height:16px;background:#d4d4d4;"></div>
<div style="left:664px;top:224px;width:1px;height:16px;background:#d4d4d4;"></div>
<div style="left:753px;top:224px;width:1px;height:16px;background:#d4d4d4;"></div>
<div style="left:817px;top:224px;width:1px;height:16px;background:#d4d4d4;"></div>
<div style="left:664px;top:240px;width:1px;height:16px;background:#d4d4d4;"></div>
<div style="left:753px;top:240px;width:1px;height:16px;background:#d4d4d4;"></div>
<div style="left:817px;top:240px;width:1px;height:16px;background:#d4d4d4;"></div>
<div style="left:664px;top:256px;width:1px;height:16px;background:#d4d4d4;"></div>
<div style="left:753px;top:256px;width:1px;height:16px;background:#d4d4d4;"></div>
<div style="left:817px;top:256px;width:1px;height:16px;background:#d4d4d4;"></div>
<div style="left:664px;top:272px;width:1px;height:16px;background:#d4d4d4;"></div>
<div style="left:753px;top:272px;width:1px;height:16px;background:#d4d4d4;"></div>
<div style="left:817px;top:272px;width:1px;height:16px;background:#d4d4d4;"></div>
<div style="left:664px;top:288px;width:1px;height:16px;background:#d4d4d4;"></div>
<div style="left:753px;top:288px;width:1px;height:16px;background:#d4d4d4;"></div>
<div style="left:817px;top:288px;width:1px;height:16px;background:#d4d4d4;"></div>
<div style="left:664px;top:304px;width:1px;height:16px;background:#d4d4d4;"></div>
<div style="left:753px;top:304px;width:1px;height:16px;background:#d4d4d4;"></div>
<div style="left:817px;top:304px;width:1px;height:16px;background:#d4d4d4;"></div>
<div style="left:664px;top:320px;width:1px;height:16px;background:#d4d4d4;"></div>
<div style="left:753px;top:320px;width:1px;height:16px;background:#d4d4d4;"></div>
<div style="left:817px;top:320px;width:1px;height:16px;background:#d4d4d4;"></div>
<div style="left:664px;top:336px;width:1px;height:16px;background:#d4d4d4;"></div>
<div style="left:753px;top:336px;width:1px;height:16px;background:#d4d4d4;"></div>
<div style="left:817px;top:336px;width:1px;height:16px;background:#d4d4d4;"></div>
<div style="left:664px;top:352px;width:1px;height:16px;background:#d4d4d4;"></div>
<div style="left:753px;top:352px;width:1px;height:16px;background:#d4d4d4;"></div>
<div style="left:817px;top:352px;width:1px;height:16px;background:#d4d4d4;"></div>
<div style="left:664px;top:368px;width:1px;height:16px;background:#d4d4d4;"></div>
<div style="left:753px;top:368px;width:1px;height:16px;background:#d4d4d4;"></div>
<div style="left:817px;top:368px;width:1px;height:16px;background:#d4d4d4;"></div>
<div style="left:664px;top:384px;width:1px;height:16px;background:#d4d4d4;"></div>
<div style="left:753px;top:384px;width:1px;height:16px;background:#d4d4d4;"></div>
<div style="left:817px;top:384px;width:1px;height:16px;background:#d4d4d4;"></div>
<div style="left:664px;top:400px;width:1px;height:16px;background:#d4d4d4;"></div>
<div style="left:753px;top:400px;width:1px;height:16px;background:#d4d4d4;"></div>
<div style="left:817px;top:400px;width:1px;height:16px;background:#d4d4d4;"></div>
<div style="left:664px;top:416px;width:1px;height:16px;background:#d4d4d4;"></div>
<div style="left:753px;top:416px;width:1px;height:16px;background:#d4d4d4;"></div>
<div style="left:817px;top:416px;width:1px;height:16px;background:#d4d4d4;"></div>
<div style="left:664px;top:432px;width:1px;height:16px;background:#d4d4d4;"></div>
<div style="left:753px;top:432px;width:1px;height:16px;background:#d4d4d4;"></div>
<div style="left:817px;top:432px;width:1px;height:16px;background:#d4d4d4;"></div>
<div style="left:664px;top:448px;width:1px;height:16px;background:#d4d4d4;"></div>
<div style="left:753px;top:448px;width:1px;height:16px;background:#d4d4d4;"></div>
<div style="left:817px;top:448px;width:1px;height:16px;background:#d4d4d4;"></div>
<div style="left:664px;top:464px;width:1px;height:32px;background:#d4d4d4;"></div>
<div style="left:753px;top:464px;width:1px;height:32px;background:#d4d4d4;"></div>
<div style="left:817px;top:464px;width:1px;height:32px;background:#d4d4d4;"></div>
<div style="left:664px;top:496px;width:1px;height:16px;background:#d4d4d4;"></div>
<div style="left:753px;top:496px;width:1px;height:16px;background:#d4d4d4;"></div>
<div style="left:817px;top:496px;width:1px;height:16px;background:#d4d4d4;"></div>
<div style="left:664px;top:512px;width:1px;height:32px;background:#d4d4d4;"></div>
<div style="left:753px;top:512px;width:1px;height:32px;background:#d4d4d4;"></div>
<div style="left:817px;top:512px;width:1px;height:32px;background:#d4d4d4;"></div>
<div style="left:664px;top:544px;width:1px;height:16px;background:#d4d4d4;"></div>
<div style="left:753px;top:544px;width:1px;height:16px;background:#d4d4d4;"></div>
<div style="left:817px;top:544px;width:1px;height:16px;background:#d4d4d4;"></div>
<div style="left:664px;top:560px;width:1px;height:16px;background:#d4d4d4;"></div>
<div style="left:753px;top:560px;width:1px;height:16px;background:#d4d4d4;"></div>
<div style="left:817px;top:560px;width:1px;height:16px;background:#d4d4d4;"></div>
<div style="left:664px;top:576px;width:1px;height:16px;background:#d4d4d4;"></div>
<div style="left:753px;top:576px;width:1px;height:16px;background:#d4d4d4;"></div>
<div style="left:817px;top:576px;width:1px;height:16px;background:#d4d4d4;"></div>
<div style="left:664px;top:592px;width:1px;height:16px;background:#d4d4d4;"></div>
<div style="left:753px;top:592px;width:1px;height:16px;background:#d4d4d4;"></div>
<div style="left:817px;top:592px;width:1px;height:16px;background:#d4d4d4;"></div>
<div style="left:664px;top:608px;width:1px;height:16px;background:#d4d4d4;"></div>
<div style="left:753px;top:608px;width:1px;height:16px;background:#d4d4d4;"></div>
<div style="left:817px;top:608px;width:1px;height:16px;background:#d4d4d4;"></div>
<div style="left:664px;top:624px;width:1px;height:16px;background:#d4d4d4;"></div>
<div style="left:753px;top:624px;width:1px;height:16px;background:#d4d4d4;"></div>
<div style="left:817px;top:624px;width:1px;height:16px;background:#d4d4d4;"></div>
<div style="left:664px;top:640px;width:1px;height:16px;background:#d4d4d4;"></div>
<div style="left:753px;top:640px;width:1px;height:16px;background:#d4d4d4;"></div>
<div style="left:817px;top:640px;width:1px;height:16px;background:#d4d4d4;"></div>
<div style="left:664px;top:656px;width:1px;height:16px;background:#d4d4d4;"></div>
<div style="left:753px;top:656px;width:1px;height:16px;background:#d4d4d4;"></div>
<div style="left:817px;top:656px;width:1px;height:16px;background:#d4d4d4;"></div>
<div style="left:664px;top:672px;width:1px;height:16px;background:#d4d4d4;"></div>
<div style="left:753px;top:672px;width:1px;height:16px;background:#d4d4d4;"></div>
<div style="left:817px;top:672px;width:1px;height:16px;background:#d4d4d4;"></div>
<div style="left:0px;top:176px;width:881px;height:1px;background:#a0a0a0;"></div>
<p class="c" style="left:25px;top:97px;width:200px;height:15px;text-align:left;">eile in Dienstposten</p>
<p class="c" style="left:66px;top:113px;width:115px;height:15px;text-align:center;padding:0 2px;">PVB</p>
<p class="c" style="left:26px;top:129px;width:35px;height:15px;text-align:center;padding:0 2px;">hD</p>
<p class="c" style="left:66px;top:129px;width:35px;height:15px;text-align:center;padding:0 2px;">mD</p>
<p class="c" style="left:106px;top:129px;width:35px;height:15px;text-align:center;padding:0 2px;">gD</p>
<p class="c" style="left:146px;top:129px;width:35px;height:15px;text-align:center;padding:0 2px;">hD</p>
<p class="c b" style="left:26px;top:145px;width:35px;height:15px;text-align:center;padding:0 2px;">0,805</p>
<p class="c b" style="left:66px;top:145px;width:35px;height:15px;text-align:center;padding:0 2px;">6,7</p>
<p class="c b" style="left:106px;top:145px;width:35px;height:15px;text-align:center;padding:0 2px;">19,15</p>
<p class="c b" style="left:146px;top:145px;width:35px;height:15px;text-align:center;padding:0 2px;">1,65</p>
<p class="c" style="left:26px;top:177px;width:35px;height:15px;text-align:right;padding:0 2px;">0</p>
<p class="c" style="left:66px;top:177px;width:35px;height:15px;text-align:right;padding:0 2px;">0</p>
<p class="c" style="left:106px;top:177px;width:35px;height:15px;text-align:right;padding:0 2px;">0</p>
<p class="c" style="left:146px;top:177px;width:35px;height:15px;text-align:right;padding:0 2px;">0</p>
<p class="c" style="left:26px;top:321px;width:35px;height:15px;text-align:right;padding:0 2px;">0</p>
<p class="c" style="left:66px;top:321px;width:35px;height:15px;text-align:right;padding:0 2px;">0</p>
<p class="c" style="left:106px;top:321px;width:35px;height:15px;text-align:right;padding:0 2px;">0</p>
<p class="c" style="left:146px;top:321px;width:35px;height:15px;text-align:right;padding:0 2px;">0</p>
<p class="c" style="left:26px;top:673px;width:35px;height:15px;text-align:right;padding:0 2px;">0</p>
<p class="c" style="left:66px;top:673px;width:35px;height:15px;text-align:right;padding:0 2px;">2</p>
<p class="c" style="left:106px;top:673px;width:35px;height:15px;text-align:right;padding:0 2px;">10,9</p>
<p class="c" style="left:146px;top:673px;width:35px;height:15px;text-align:right;padding:0 2px;">1,5</p>
<p class="c" style="left:217px;top:81px;width:117px;height:15px;text-align:center;padding:0 2px;">Bearbeiter</p>
<p class="c g" style="left:250px;top:120.5px;width:84px;height:15px;text-align:center;padding:0 2px;">Name</p>
<p class="c" style="left:339px;top:112.5px;width:212px;height:15px;text-align:center;padding:0 2px;">Bemerkung</p>
<p class="c" style="left:250px;top:336.5px;width:84px;height:15px;text-align:left;padding:0 2px;">Wurst, H.</p>
<p class="c" style="left:250px;top:352.5px;width:84px;height:15px;text-align:left;padding:0 2px;">Ditrich, M.</p>
<p class="c" style="left:250px;top:368.5px;width:84px;height:15px;text-align:left;padding:0 2px;">Potsch, L.</p>
<p class="c" style="left:250px;top:384.5px;width:84px;height:15px;text-align:left;padding:0 2px;">Wurst, H.</p>
<p class="c" style="left:250px;top:400.5px;width:84px;height:15px;text-align:left;padding:0 2px;">Illjitsch, I.</p>
<p class="c" style="left:250px;top:416.5px;width:84px;height:15px;text-align:left;padding:0 2px;">Potsch, L.</p>
<p class="c" style="left:250px;top:432.5px;width:84px;height:15px;text-align:left;padding:0 2px;">Potsch, J.</p>
<p class="c" style="left:250px;top:448.5px;width:84px;height:15px;text-align:left;padding:0 2px;">Wurst, H.</p>
<p class="c" style="left:250px;top:472.5px;width:84px;height:15px;text-align:left;padding:0 2px;">Illjitsch, I.</p>
<p class="c" style="left:250px;top:496.5px;width:84px;height:15px;text-align:left;padding:0 2px;">Abrecht, Z.-K.</p>
<p class="c" style="left:250px;top:520.5px;width:84px;height:15px;text-align:left;padding:0 2px;">Maus, M.</p>
<p class="c" style="left:250px;top:544.5px;width:84px;height:15px;text-align:left;padding:0 2px;">Duck, D.</p>
<p class="c" style="left:250px;top:560.5px;width:84px;height:15px;text-align:left;padding:0 2px;">Duck, D.</p>
<p class="c" style="left:250px;top:576.5px;width:84px;height:15px;text-align:left;padding:0 2px;">Potsch, L.</p>
<p class="c" style="left:250px;top:592.5px;width:84px;height:15px;text-align:left;padding:0 2px;">Wurst, H.</p>
<p class="c g rot" style="left:187px;top:158px;">Dienstposten</p>
<p class="c g rot" style="left:202px;top:158px;">hinterlegt?</p>
<p class="c g rot" style="left:226px;top:158px;">Dienstgrad</p>
<p class="c" style="left:576px;top:81.0px;width:84px;height:30px;text-align:center;padding:0 2px;">Mitarbeiter<br>gesamt</p>
<p class="c" style="left:665px;top:81.0px;width:84px;height:30px;text-align:center;padding:0 2px;">Dienstposten<br>gesamt</p>
<p class="c b" style="left:576px;top:113px;width:84px;height:15px;text-align:center;padding:0 2px;">8</p>
<p class="c b" style="left:665px;top:113px;width:84px;height:15px;text-align:right;padding:0 2px;">47,723</p>
<p class="c" style="left:576px;top:129px;width:173px;height:15px;text-align:center;padding:0 2px;">Mitarbeiterliste</p>
<p class="c" style="left:576px;top:146px;width:84px;height:15px;text-align:left;padding:0 2px;">Name</p>
<p class="c" style="left:665px;top:146px;width:84px;height:15px;text-align:left;padding:0 2px;">Arbeitszeitanteil</p>
<p class="c" style="left:576px;top:177px;width:84px;height:15px;text-align:center;padding:0 2px;">Wurst, H.</p>
<p class="c" style="left:576px;top:193px;width:84px;height:15px;text-align:center;padding:0 2px;">Ditrich, M.</p>
<p class="c" style="left:576px;top:209px;width:84px;height:15px;text-align:center;padding:0 2px;">Potsch, L.</p>
<p class="c" style="left:576px;top:225px;width:84px;height:15px;text-align:center;padding:0 2px;">Illjitsch, I.</p>
<p class="c" style="left:576px;top:241px;width:84px;height:15px;text-align:center;padding:0 2px;">Potsch, J.</p>
<p class="c" style="left:576px;top:257px;width:84px;height:15px;text-align:center;padding:0 2px;">Abrecht, Z.-K.</p>
<p class="c" style="left:576px;top:273px;width:84px;height:15px;text-align:center;padding:0 2px;">Maus, M.</p>
<p class="c" style="left:576px;top:289px;width:84px;height:15px;text-align:center;padding:0 2px;">Duck, D.</p>
<p class="c" style="left:665px;top:176.5px;width:84px;height:15px;text-align:center;padding:0 2px;">642</p>
<p class="c" style="left:665px;top:192.5px;width:84px;height:15px;text-align:center;padding:0 2px;">636</p>
<p class="c" style="left:665px;top:208.5px;width:84px;height:15px;text-align:center;padding:0 2px;">641</p>
<p class="c" style="left:665px;top:224.5px;width:84px;height:15px;text-align:center;padding:0 2px;">638</p>
<p class="c" style="left:665px;top:240.5px;width:84px;height:15px;text-align:center;padding:0 2px;">640</p>
<p class="c" style="left:665px;top:256.5px;width:84px;height:15px;text-align:center;padding:0 2px;">635</p>
<p class="c" style="left:665px;top:272.5px;width:84px;height:15px;text-align:center;padding:0 2px;">639</p>
<p class="c" style="left:665px;top:288.5px;width:84px;height:15px;text-align:center;padding:0 2px;">637</p>
<p class="c" style="left:665px;top:304.5px;width:84px;height:15px;text-align:center;padding:0 2px;">1000</p>
<p class="c" style="left:665px;top:320.5px;width:84px;height:15px;text-align:center;padding:0 2px;">1000</p>
<p class="c" style="left:665px;top:336.5px;width:84px;height:15px;text-align:center;padding:0 2px;">1000</p>
<p class="c" style="left:665px;top:352.5px;width:84px;height:15px;text-align:center;padding:0 2px;">1000</p>
<p class="c" style="left:665px;top:368.5px;width:84px;height:15px;text-align:center;padding:0 2px;">1000</p>
<p class="c" style="left:665px;top:384.5px;width:84px;height:15px;text-align:center;padding:0 2px;">1000</p>
<p class="c" style="left:665px;top:400.5px;width:84px;height:15px;text-align:center;padding:0 2px;">1000</p>
<p class="c" style="left:665px;top:416.5px;width:84px;height:15px;text-align:center;padding:0 2px;">1000</p>
<p class="c" style="left:665px;top:432.5px;width:84px;height:15px;text-align:center;padding:0 2px;">1000</p>
<p class="c" style="left:665px;top:448.5px;width:84px;height:15px;text-align:center;padding:0 2px;">1000</p>
<p class="c" style="left:665px;top:472.5px;width:84px;height:15px;text-align:center;padding:0 2px;">1000</p>
<p class="c" style="left:665px;top:496.5px;width:84px;height:15px;text-align:center;padding:0 2px;">1000</p>
<p class="c" style="left:665px;top:520.5px;width:84px;height:15px;text-align:center;padding:0 2px;">1000</p>
<p class="c" style="left:665px;top:544.5px;width:84px;height:15px;text-align:center;padding:0 2px;">1000</p>
<p class="c" style="left:665px;top:560.5px;width:84px;height:15px;text-align:center;padding:0 2px;">1000</p>
<p class="c" style="left:665px;top:576.5px;width:84px;height:15px;text-align:center;padding:0 2px;">1000</p>
<p class="c" style="left:665px;top:592.5px;width:84px;height:15px;text-align:center;padding:0 2px;">1000</p>
<p class="c" style="left:665px;top:608.5px;width:84px;height:15px;text-align:center;padding:0 2px;">1000</p>
<p class="c" style="left:665px;top:624.5px;width:84px;height:15px;text-align:center;padding:0 2px;">1000</p>
<p class="c" style="left:665px;top:640.5px;width:84px;height:15px;text-align:center;padding:0 2px;">1000</p>
<p class="c" style="left:665px;top:656.5px;width:84px;height:15px;text-align:center;padding:0 2px;">1000</p>
<p class="c" style="left:754px;top:178px;width:59px;height:15px;text-align:right;padding:0 2px;">0</p>
<p class="c" style="left:754px;top:194px;width:59px;height:15px;text-align:left;padding:0 2px;">Ditrich, M.</p>
<p class="c" style="left:754px;top:210px;width:59px;height:15px;text-align:left;padding:0 2px;">Ditrich, M.</p>
<p class="c" style="left:754px;top:226px;width:59px;height:15px;text-align:left;padding:0 2px;">Ditrich, M.</p>
<p class="c" style="left:754px;top:242px;width:59px;height:15px;text-align:left;padding:0 2px;">Ditrich, M.</p>
<p class="c" style="left:754px;top:258px;width:59px;height:15px;text-align:left;padding:0 2px;">Ditrich, M.</p>
<p class="c" style="left:754px;top:274px;width:59px;height:15px;text-align:left;padding:0 2px;">Ditrich, M.</p>
<p class="c" style="left:754px;top:290px;width:59px;height:15px;text-align:left;padding:0 2px;">Ditrich, M.</p>
<p class="c" style="left:754px;top:306px;width:59px;height:15px;text-align:left;padding:0 2px;">Ditrich, M.</p>
<p class="c" style="left:754px;top:322px;width:59px;height:15px;text-align:left;padding:0 2px;">Ditrich, M.</p>
<p class="c" style="left:754px;top:338px;width:59px;height:15px;text-align:left;padding:0 2px;">Ditrich, M.</p>
<p class="c" style="left:754px;top:354px;width:59px;height:15px;text-align:left;padding:0 2px;">Ditrich, M.</p>
<p class="c" style="left:754px;top:370px;width:59px;height:15px;text-align:left;padding:0 2px;">Ditrich, M.</p>
<p class="c" style="left:754px;top:386px;width:59px;height:15px;text-align:left;padding:0 2px;">Ditrich, M.</p>
<p class="c" style="left:754px;top:402px;width:59px;height:15px;text-align:left;padding:0 2px;">Ditrich, M.</p>
<p class="c" style="left:754px;top:418px;width:59px;height:15px;text-align:left;padding:0 2px;">Ditrich, M.</p>
<p class="c" style="left:754px;top:434px;width:59px;height:15px;text-align:left;padding:0 2px;">Ditrich, M.</p>
<p class="c" style="left:754px;top:450px;width:59px;height:15px;text-align:left;padding:0 2px;">Ditrich, M.</p>
<p class="c" style="left:754px;top:482px;width:59px;height:15px;text-align:left;padding:0 2px;">Ditrich, M.</p>
<p class="c" style="left:754px;top:498px;width:59px;height:15px;text-align:left;padding:0 2px;">Ditrich, M.</p>
<p class="c" style="left:754px;top:530px;width:59px;height:15px;text-align:left;padding:0 2px;">Ditrich, M.</p>
<p class="c" style="left:754px;top:546px;width:59px;height:15px;text-align:left;padding:0 2px;">Ditrich, M.</p>
<p class="c" style="left:754px;top:562px;width:59px;height:15px;text-align:center;padding:0 2px;">#ZAHL!</p>
<svg style="left:754px;top:561px" width="6" height="6"><path d="M0 0H5L0 5Z" fill="#008a00"/></svg>
<p class="c" style="left:754px;top:578px;width:59px;height:15px;text-align:center;padding:0 2px;">#ZAHL!</p>
<svg style="left:754px;top:577px" width="6" height="6"><path d="M0 0H5L0 5Z" fill="#008a00"/></svg>
<p class="c" style="left:754px;top:594px;width:59px;height:15px;text-align:center;padding:0 2px;">#ZAHL!</p>
<svg style="left:754px;top:593px" width="6" height="6"><path d="M0 0H5L0 5Z" fill="#008a00"/></svg>
<p class="c" style="left:754px;top:610px;width:59px;height:15px;text-align:center;padding:0 2px;">#ZAHL!</p>
<svg style="left:754px;top:609px" width="6" height="6"><path d="M0 0H5L0 5Z" fill="#008a00"/></svg>
<p class="c" style="left:754px;top:626px;width:59px;height:15px;text-align:center;padding:0 2px;">#ZAHL!</p>
<svg style="left:754px;top:625px" width="6" height="6"><path d="M0 0H5L0 5Z" fill="#008a00"/></svg>
<p class="c" style="left:754px;top:642px;width:59px;height:15px;text-align:center;padding:0 2px;">#ZAHL!</p>
<svg style="left:754px;top:641px" width="6" height="6"><path d="M0 0H5L0 5Z" fill="#008a00"/></svg>
<p class="c" style="left:754px;top:658px;width:59px;height:15px;text-align:center;padding:0 2px;">#ZAHL!</p>
<svg style="left:754px;top:657px" width="6" height="6"><path d="M0 0H5L0 5Z" fill="#008a00"/></svg>
<div style="left:574px;top:175px;width:92px;height:1px;background:#217346;"></div>
<div style="left:574px;top:176px;width:2px;height:18px;background:#217346;"></div>
<div style="left:664px;top:176px;width:2px;height:13px;background:#217346;"></div>
<div style="left:574px;top:192px;width:87px;height:2px;background:#217346;"></div>
<div style="left:662px;top:190px;width:5px;height:5px;background:#217346;"></div>
<div style="left:0px;top:45px;width:880px;height:19px;background:#fff"></div>
<div style="left:575px;top:45px;width:90px;height:18px;background:#e1e1e1"></div>
<div style="left:26px;top:45px;width:39px;height:18px;overflow:hidden"><p class="h" style="left:-0.5px;top:-0.5px;width:40px;height:19px;">T</p></div>
<div style="left:25px;top:45px;width:1px;height:18px;background:#e2e2e2"></div>
<div style="left:66px;top:45px;width:39px;height:18px;overflow:hidden"><p class="h" style="left:-0.5px;top:-0.5px;width:40px;height:19px;">U</p></div>
<div style="left:65px;top:45px;width:1px;height:18px;background:#e2e2e2"></div>
<div style="left:106px;top:45px;width:39px;height:18px;overflow:hidden"><p class="h" style="left:-0.5px;top:-0.5px;width:40px;height:19px;">V</p></div>
<div style="left:105px;top:45px;width:1px;height:18px;background:#e2e2e2"></div>
<div style="left:146px;top:45px;width:39px;height:18px;overflow:hidden"><p class="h" style="left:-0.5px;top:-0.5px;width:40px;height:19px;">W</p></div>
<div style="left:145px;top:45px;width:1px;height:18px;background:#e2e2e2"></div>
<div style="left:186px;top:45px;width:6px;height:18px;overflow:hidden"><p class="h" style="left:-0.5px;top:-0.5px;width:7px;height:19px;">X</p></div>
<div style="left:185px;top:45px;width:1px;height:18px;background:#e2e2e2"></div>
<div style="left:193px;top:45px;width:11px;height:18px;overflow:hidden"><p class="h" style="left:-0.5px;top:-0.5px;width:12px;height:19px;">Y</p></div>
<div style="left:192px;top:45px;width:1px;height:18px;background:#e2e2e2"></div>
<div style="left:205px;top:45px;width:11px;height:18px;overflow:hidden"><p class="h" style="left:-0.5px;top:-0.5px;width:12px;height:19px;">Z</p></div>
<div style="left:204px;top:45px;width:1px;height:18px;background:#e2e2e2"></div>
<div style="left:217px;top:45px;width:32px;height:18px;overflow:hidden"><p class="h" style="left:-0.5px;top:-0.5px;width:33px;height:19px;">AA</p></div>
<div style="left:216px;top:45px;width:1px;height:18px;background:#e2e2e2"></div>
<div style="left:250px;top:45px;width:88px;height:18px;overflow:hidden"><p class="h" style="left:-0.5px;top:-0.5px;width:89px;height:19px;">AB</p></div>
<div style="left:249px;top:45px;width:1px;height:18px;background:#e2e2e2"></div>
<div style="left:339px;top:45px;width:216px;height:18px;overflow:hidden"><p class="h" style="left:-0.5px;top:-0.5px;width:217px;height:19px;">AC</p></div>
<div style="left:338px;top:45px;width:1px;height:18px;background:#e2e2e2"></div>
<div style="left:556px;top:45px;width:19px;height:18px;overflow:hidden"><p class="h" style="left:-0.5px;top:-0.5px;width:20px;height:19px;">AD</p></div>
<div style="left:555px;top:45px;width:1px;height:18px;background:#e2e2e2"></div>
<div style="left:576px;top:45px;width:88px;height:18px;overflow:hidden"><p class="h sel" style="left:-0.5px;top:-0.5px;width:89px;height:19px;">AE</p></div>
<div style="left:575px;top:45px;width:1px;height:18px;background:#bdbdbd"></div>
<div style="left:665px;top:45px;width:88px;height:18px;overflow:hidden"><p class="h" style="left:-0.5px;top:-0.5px;width:89px;height:19px;">AF</p></div>
<div style="left:664px;top:45px;width:1px;height:18px;background:#bdbdbd"></div>
<div style="left:754px;top:45px;width:63px;height:18px;overflow:hidden"><p class="h" style="left:-0.5px;top:-0.5px;width:64px;height:19px;">AG</p></div>
<div style="left:753px;top:45px;width:1px;height:18px;background:#e2e2e2"></div>
<div style="left:818px;top:45px;width:65px;height:18px;overflow:hidden"><p class="h" style="left:-0.5px;top:-0.5px;width:66px;height:19px;">AH</p></div>
<div style="left:817px;top:45px;width:1px;height:18px;background:#e2e2e2"></div>
<div style="left:0px;top:64px;width:880px;height:1px;background:#ababab"></div>
<div style="left:575px;top:63px;width:90px;height:2px;background:#217346"></div>
<svg style="left:0;top:45px" width="25" height="19"><path d="M22 4V16H10Z" fill="#dadada"/></svg>
<div style="left:0px;top:65px;width:25px;height:15px;background:#fff"></div>
<p class="rh" style="left:0;top:65px;width:25px;height:17px;">1</p>
<div style="left:0px;top:81px;width:25px;height:15px;background:#fff"></div>
<div style="left:0px;top:80px;width:25px;height:1px;background:#d8d8d8"></div>
<p class="rh" style="left:0;top:81px;width:25px;height:17px;">2</p>
<div style="left:0px;top:97px;width:25px;height:15px;background:#fff"></div>
<div style="left:0px;top:96px;width:25px;height:1px;background:#d8d8d8"></div>
<p class="rh" style="left:0;top:97px;width:25px;height:17px;">3</p>
<div style="left:0px;top:113px;width:25px;height:15px;background:#fff"></div>
<div style="left:0px;top:112px;width:25px;height:1px;background:#d8d8d8"></div>
<p class="rh" style="left:0;top:113px;width:25px;height:17px;">4</p>
<div style="left:0px;top:129px;width:25px;height:15px;background:#fff"></div>
<div style="left:0px;top:128px;width:25px;height:1px;background:#d8d8d8"></div>
<p class="rh" style="left:0;top:129px;width:25px;height:17px;">5</p>
<div style="left:0px;top:145px;width:25px;height:15px;background:#fff"></div>
<div style="left:0px;top:144px;width:25px;height:1px;background:#d8d8d8"></div>
<p class="rh" style="left:0;top:145px;width:25px;height:17px;">6</p>
<div style="left:0px;top:161px;width:25px;height:15px;background:#fff"></div>
<div style="left:0px;top:160px;width:25px;height:1px;background:#d8d8d8"></div>
<p class="rh" style="left:0;top:161px;width:25px;height:17px;">7</p>
<div style="left:0px;top:177px;width:25px;height:15px;background:#e1e1e1"></div>
<div style="left:0px;top:176px;width:25px;height:1px;background:#d8d8d8"></div>
<p class="rh sel" style="left:0;top:177px;width:25px;height:17px;">8</p>
<div style="left:0px;top:193px;width:25px;height:15px;background:#fff"></div>
<div style="left:0px;top:192px;width:25px;height:1px;background:#d8d8d8"></div>
<p class="rh" style="left:0;top:193px;width:25px;height:17px;">9</p>
<div style="left:0px;top:209px;width:25px;height:15px;background:#fff"></div>
<div style="left:0px;top:208px;width:25px;height:1px;background:#d8d8d8"></div>
<p class="rh" style="left:0;top:209px;width:25px;height:17px;">10</p>
<div style="left:0px;top:225px;width:25px;height:15px;background:#fff"></div>
<div style="left:0px;top:224px;width:25px;height:1px;background:#d8d8d8"></div>
<p class="rh" style="left:0;top:225px;width:25px;height:17px;">11</p>
<div style="left:0px;top:241px;width:25px;height:15px;background:#fff"></div>
<div style="left:0px;top:240px;width:25px;height:1px;background:#d8d8d8"></div>
<p class="rh" style="left:0;top:241px;width:25px;height:17px;">12</p>
<div style="left:0px;top:257px;width:25px;height:15px;background:#fff"></div>
<div style="left:0px;top:256px;width:25px;height:1px;background:#d8d8d8"></div>
<p class="rh" style="left:0;top:257px;width:25px;height:17px;">13</p>
<div style="left:0px;top:273px;width:25px;height:15px;background:#fff"></div>
<div style="left:0px;top:272px;width:25px;height:1px;background:#d8d8d8"></div>
<p class="rh" style="left:0;top:273px;width:25px;height:17px;">14</p>
<div style="left:0px;top:289px;width:25px;height:15px;background:#fff"></div>
<div style="left:0px;top:288px;width:25px;height:1px;background:#d8d8d8"></div>
<p class="rh" style="left:0;top:289px;width:25px;height:17px;">15</p>
<div style="left:0px;top:305px;width:25px;height:15px;background:#fff"></div>
<div style="left:0px;top:304px;width:25px;height:1px;background:#d8d8d8"></div>
<p class="rh" style="left:0;top:305px;width:25px;height:17px;">16</p>
<div style="left:0px;top:321px;width:25px;height:15px;background:#fff"></div>
<div style="left:0px;top:320px;width:25px;height:1px;background:#d8d8d8"></div>
<p class="rh" style="left:0;top:321px;width:25px;height:17px;">17</p>
<div style="left:0px;top:337px;width:25px;height:15px;background:#fff"></div>
<div style="left:0px;top:336px;width:25px;height:1px;background:#d8d8d8"></div>
<p class="rh" style="left:0;top:337px;width:25px;height:17px;">18</p>
<div style="left:0px;top:353px;width:25px;height:15px;background:#fff"></div>
<div style="left:0px;top:352px;width:25px;height:1px;background:#d8d8d8"></div>
<p class="rh" style="left:0;top:353px;width:25px;height:17px;">19</p>
<div style="left:0px;top:369px;width:25px;height:15px;background:#fff"></div>
<div style="left:0px;top:368px;width:25px;height:1px;background:#d8d8d8"></div>
<p class="rh" style="left:0;top:369px;width:25px;height:17px;">20</p>
<div style="left:0px;top:385px;width:25px;height:15px;background:#fff"></div>
<div style="left:0px;top:384px;width:25px;height:1px;background:#d8d8d8"></div>
<p class="rh" style="left:0;top:385px;width:25px;height:17px;">21</p>
<div style="left:0px;top:401px;width:25px;height:15px;background:#fff"></div>
<div style="left:0px;top:400px;width:25px;height:1px;background:#d8d8d8"></div>
<p class="rh" style="left:0;top:401px;width:25px;height:17px;">22</p>
<div style="left:0px;top:417px;width:25px;height:15px;background:#fff"></div>
<div style="left:0px;top:416px;width:25px;height:1px;background:#d8d8d8"></div>
<p class="rh" style="left:0;top:417px;width:25px;height:17px;">23</p>
<div style="left:0px;top:433px;width:25px;height:15px;background:#fff"></div>
<div style="left:0px;top:432px;width:25px;height:1px;background:#d8d8d8"></div>
<p class="rh" style="left:0;top:433px;width:25px;height:17px;">24</p>
<div style="left:0px;top:449px;width:25px;height:15px;background:#fff"></div>
<div style="left:0px;top:448px;width:25px;height:1px;background:#d8d8d8"></div>
<p class="rh" style="left:0;top:449px;width:25px;height:17px;">25</p>
<div style="left:0px;top:465px;width:25px;height:31px;background:#fff"></div>
<div style="left:0px;top:464px;width:25px;height:1px;background:#d8d8d8"></div>
<p class="rh" style="left:0;top:481px;width:25px;height:17px;">26</p>
<div style="left:0px;top:497px;width:25px;height:15px;background:#fff"></div>
<div style="left:0px;top:496px;width:25px;height:1px;background:#d8d8d8"></div>
<p class="rh" style="left:0;top:497px;width:25px;height:17px;">27</p>
<div style="left:0px;top:513px;width:25px;height:31px;background:#fff"></div>
<div style="left:0px;top:512px;width:25px;height:1px;background:#d8d8d8"></div>
<p class="rh" style="left:0;top:529px;width:25px;height:17px;">28</p>
<div style="left:0px;top:545px;width:25px;height:15px;background:#fff"></div>
<div style="left:0px;top:544px;width:25px;height:1px;background:#d8d8d8"></div>
<p class="rh" style="left:0;top:545px;width:25px;height:17px;">29</p>
<div style="left:0px;top:561px;width:25px;height:15px;background:#fff"></div>
<div style="left:0px;top:560px;width:25px;height:1px;background:#d8d8d8"></div>
<p class="rh" style="left:0;top:561px;width:25px;height:17px;">30</p>
<div style="left:0px;top:577px;width:25px;height:15px;background:#fff"></div>
<div style="left:0px;top:576px;width:25px;height:1px;background:#d8d8d8"></div>
<p class="rh" style="left:0;top:577px;width:25px;height:17px;">31</p>
<div style="left:0px;top:593px;width:25px;height:15px;background:#fff"></div>
<div style="left:0px;top:592px;width:25px;height:1px;background:#d8d8d8"></div>
<p class="rh" style="left:0;top:593px;width:25px;height:17px;">32</p>
<div style="left:0px;top:609px;width:25px;height:15px;background:#fff"></div>
<div style="left:0px;top:608px;width:25px;height:1px;background:#d8d8d8"></div>
<p class="rh" style="left:0;top:609px;width:25px;height:17px;">33</p>
<div style="left:0px;top:625px;width:25px;height:15px;background:#fff"></div>
<div style="left:0px;top:624px;width:25px;height:1px;background:#d8d8d8"></div>
<p class="rh" style="left:0;top:625px;width:25px;height:17px;">34</p>
<div style="left:0px;top:641px;width:25px;height:15px;background:#fff"></div>
<div style="left:0px;top:640px;width:25px;height:1px;background:#d8d8d8"></div>
<p class="rh" style="left:0;top:641px;width:25px;height:17px;">35</p>
<div style="left:0px;top:657px;width:25px;height:15px;background:#fff"></div>
<div style="left:0px;top:656px;width:25px;height:1px;background:#d8d8d8"></div>
<p class="rh" style="left:0;top:657px;width:25px;height:17px;">36</p>
<div style="left:0px;top:673px;width:25px;height:15px;background:#fff"></div>
<div style="left:0px;top:672px;width:25px;height:1px;background:#d8d8d8"></div>
<p class="rh" style="left:0;top:673px;width:25px;height:17px;">37</p>
<div style="left:0px;top:176px;width:25px;height:1px;background:#ababab"></div>
<div style="left:0px;top:192px;width:25px;height:1px;background:#ababab"></div>
<div style="left:25px;top:64px;width:1px;height:617px;background:#ababab"></div>
<div style="left:24px;top:177px;width:2px;height:15px;background:#217346"></div>
<div style="left:0;top:0;width:880px;height:45px;background:#fff"></div>
<div style="left:5px;top:9px;width:100px;height:24px;border:1px solid #c6c6c6;background:#fff"></div>
<p class="tb" style="left:12px;top:14px;transform:scaleX(0.92);transform-origin:0 0;">AE8</p>
<svg style="left:92px;top:19px" width="9" height="5"><path d="M0 0H8L4 4Z" fill="#777"/></svg>
<svg style="left:120px;top:16px" width="4" height="12"><circle cx="1.5" cy="2" r="1" fill="#9a9a9a"/><circle cx="1.5" cy="6" r="1" fill="#9a9a9a"/><circle cx="1.5" cy="10" r="1" fill="#9a9a9a"/></svg>
<div style="left:137px;top:9px;width:108px;height:24px;border:1px solid #c6c6c6;background:#fff"></div>
<svg style="left:140px;top:10px" width="64" height="24"><g fill="#c8c8c8"><path d="M7.6 7.4L10.3 4.6Q17 10.5 23.9 18.7L23.1 19.5Q16 12.5 7.6 7.4Z"/><circle cx="9" cy="6" r="1.9"/><path d="M9.9 20Q14.5 12 23.9 5.9L23.3 5Q12.5 10.5 7.1 17Z"/><circle cx="8.5" cy="18.6" r="1.9"/><path d="M42.6 14.3L45.4 11.6L49.6 16.2L60.1 3.9L61.7 5.2L51.4 20.2Q50 21.2 48.8 20.2Z"/></g></svg>
<svg style="left:210px;top:6px" width="34" height="30"><g fill="none" stroke="#666" stroke-linecap="round"><path d="M9.5 24.5Q12 25.5 13.5 21L17.5 9.5Q19 6 21.5 7" stroke-width="2.1"/><path d="M12.5 12.2H20" stroke-width="1.3"/><path d="M18.3 14.8Q20.3 14 21.3 17L23.1 21.5Q23.9 23.5 25.8 22.3" stroke-width="1.6"/><path d="M25.8 14.8L18.1 23" stroke-width="1.1"/></g><g fill="#666"><circle cx="9.6" cy="24" r="1.7"/><circle cx="21.6" cy="7.6" r="1.7"/><circle cx="19" cy="22.6" r="1.2"/><circle cx="25.5" cy="15.2" r="1.2"/></g></svg>
<div style="left:250px;top:9px;width:700px;height:24px;border:1px solid #c6c6c6;background:#fff"></div>
<p class="tb" style="left:256.8px;top:14px;transform:scaleX(0.972);transform-origin:0 0;white-space:pre">{=WENN(</p>
<p class="tb" style="left:313.3px;top:14px;transform:scaleX(0.9743);transform-origin:0 0;white-space:pre">SUMME(WENN(</p>
<p class="tb" style="left:411.2px;top:14px;transform:scaleX(0.9471);transform-origin:0 0;white-space:pre">AB$9:AB$</p>
<p class="tb" style="left:470.2px;top:14px;transform:scaleX(0.9149);transform-origin:0 0;white-space:pre">650</p>
<p class="tb" style="left:490.8px;top:14px;transform:scaleX(1.0838);transform-origin:0 0;white-space:pre">=&quot;&quot;;0;1/</p>
<p class="tb" style="left:538.2px;top:14px;transform:scaleX(0.9332);transform-origin:0 0;white-space:pre">ZÄHLENWENN</p>
<p class="tb" style="left:626.4px;top:14px;transform:scaleX(0.9558);transform-origin:0 0;white-space:pre">(AB$9:AB$650;AB$9:</p>
<p class="tb" style="left:750.5px;top:14px;transform:scaleX(0.9411);transform-origin:0 0;white-space:pre">AB$650</p>
<p class="tb" style="left:795.7px;top:14px;transform:scaleX(0.9632);transform-origin:0 0;white-space:pre">))) </p>
<p class="tb" style="left:812.3px;top:14px;transform:scaleX(0.9192);transform-origin:0 0;white-space:pre">&lt; </p>
<p class="tb" style="left:823.0px;top:14px;transform:scaleX(0.8726);transform-origin:0 0;white-space:pre">ZEILE(A1)</p>
</body></html>
